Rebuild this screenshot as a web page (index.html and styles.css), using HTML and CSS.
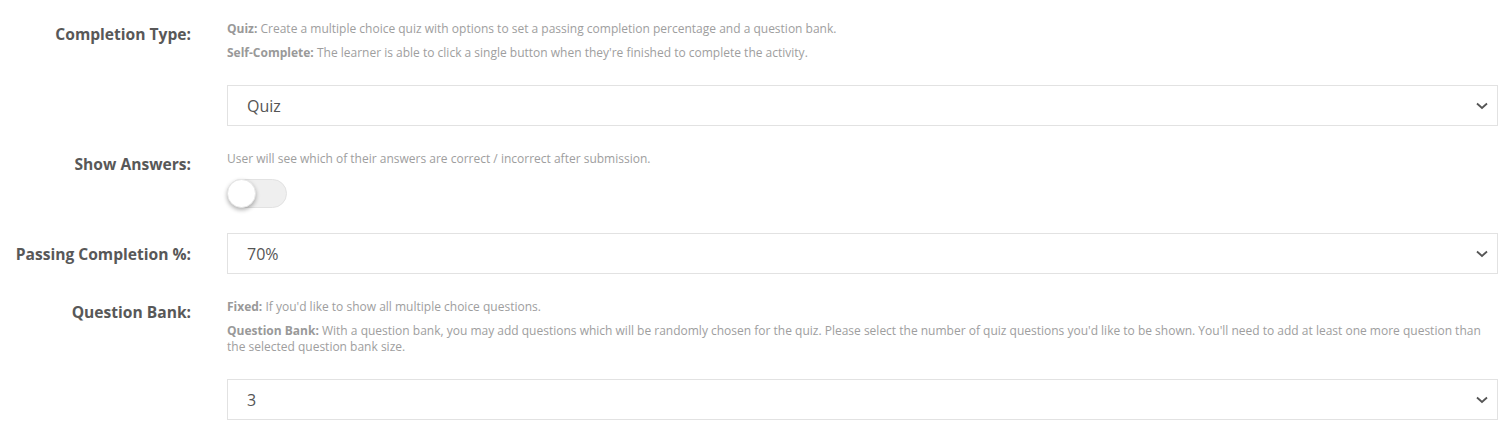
FILE: index.html
```html
<!DOCTYPE html>
<html>
<head>
<meta charset="utf-8">
<link rel="stylesheet" href="styles.css">
</head>
<body>
<div class="form">
  <div class="row">
    <div class="label">Completion Type:</div>
    <div class="field">
      <p class="help"><b>Quiz:</b> Create a multiple choice quiz with options to set a passing completion percentage and a question bank.</p>
      <p class="help"><b>Self-Complete:</b> The learner is able to click a single button when they're finished to complete the activity.</p>
      <div class="select select-spaced"><span>Quiz</span><svg class="chev" width="12" height="8" viewBox="0 0 12 8"><path d="M1 1.5 L6 6 L11 1.5" fill="none" stroke="#555" stroke-width="1.8"/></svg></div>
    </div>
  </div>
  <div class="row">
    <div class="label">Show Answers:</div>
    <div class="field">
      <p class="help">User will see which of their answers are correct / incorrect after submission.</p>
      <div class="toggle"><div class="knob"></div></div>
    </div>
  </div>
  <div class="row row-center">
    <div class="label">Passing Completion %:</div>
    <div class="field">
      <div class="select"><span>70%</span><svg class="chev" width="12" height="8" viewBox="0 0 12 8"><path d="M1 1.5 L6 6 L11 1.5" fill="none" stroke="#555" stroke-width="1.8"/></svg></div>
    </div>
  </div>
  <div class="row">
    <div class="label">Question Bank:</div>
    <div class="field">
      <p class="help"><b>Fixed:</b> If you'd like to show all multiple choice questions.</p>
      <p class="help"><b>Question Bank:</b> With a question bank, you may add questions which will be randomly chosen for the quiz. Please select the number of quiz questions you'd like to be shown. You'll need to add at least one more question than the selected question bank size.</p>
      <div class="select select-spaced"><span>3</span><svg class="chev" width="12" height="8" viewBox="0 0 12 8"><path d="M1 1.5 L6 6 L11 1.5" fill="none" stroke="#555" stroke-width="1.8"/></svg></div>
    </div>
  </div>
</div>
</body>
</html>
```
FILE: styles.css
```css
* { box-sizing: border-box; }
html, body { margin: 0; padding: 0; background: #fff; }
body { font-family: "Open Sans", "Liberation Sans", sans-serif; color: #555; }
.form { padding: 21px 14px 0 0; display: flex; flex-direction: column; gap: 25px; }
.row { display: grid; grid-template-columns: 191px 1fr; column-gap: 36px; align-items: start; }
.row-center { align-items: center; }
.label { text-align: right; font-weight: 700; font-size: 15.6px; line-height: 26px; color: #585858; }
.field { display: flex; flex-direction: column; }
.help { margin: 0 0 8px 0; font-size: 12px; line-height: 16px; color: #9e9e9e; }
.help b { font-weight: 700; color: #999; }
.select { height: 41px; border: 1px solid #e2e2e2; background: #fff; display: flex; align-items: center; justify-content: space-between; padding: 0 9px 0 19px; font-size: 16px; color: #555; }
.select-spaced { margin-top: 16px; }
.chev { display: block; }
.toggle { margin-top: 4px; width: 60px; height: 29px; border-radius: 15px; background: #efefef; border: 1px solid #e2e2e2; position: relative; }
.knob { position: absolute; left: -1px; top: -1px; width: 29px; height: 29px; border-radius: 50%; background: #fff; box-shadow: 0 2px 4px rgba(0,0,0,0.3); border: 1px solid #e6e6e6; }
```
